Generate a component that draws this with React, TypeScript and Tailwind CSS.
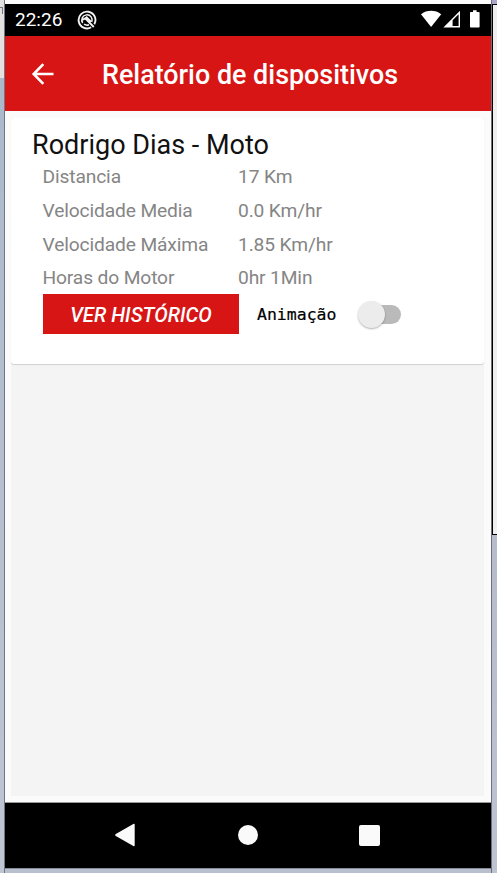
const rows = [
  { label: "Distancia", value: "17 Km" },
  { label: "Velocidade Media", value: "0.0 Km/hr" },
  { label: "Velocidade Máxima", value: "1.85 Km/hr" },
  { label: "Horas do Motor", value: "0hr 1Min" },
];

const StatusBar = () => {
  return (
    <div className="flex h-8 items-center bg-black pl-[10px] pr-[10px] text-white">
      <span className="text-[19px] leading-8">22:26</span>
      <svg className="ml-[15px]" width="20" height="20" viewBox="0 0 20 20" fill="none" stroke="#f2f2f2">
        <path d="M14.2 17.3A8.4 8.4 0 1 1 17.3 14.2" strokeWidth="1.9" />
        <path d="M5.7 13A5.2 5.2 0 1 1 14.8 12" strokeWidth="1.5" />
        <path d="M5.2 9.8L8.2 8.4L16.8 17" strokeWidth="1.9" />
        <path d="M8.8 6.8L14 12" strokeWidth="2.4" />
        <path d="M7 14.2Q9.4 15.8 12 14.7" strokeWidth="1.5" />
      </svg>
      <svg className="ml-auto" width="60" height="20" viewBox="0 0 60 20" fill="#fff">
        <path d="M0 4.3C5.5-.3 14.7-.3 20.2 4.3L10.1 17z" />
        <path fillRule="evenodd" d="M39 .8V17.4H22.4zM37.6 4.2L31.6 10.2V16H37.6z" />
        <path d="M52 .2h3.6v1.7h2.2q.8 0 .8.8v14q0 .8-.8.8h-8q-.8 0-.8-.8v-14q0-.8.8-.8H52z" />
      </svg>
    </div>
  );
};

const Header = () => {
  return (
    <header className="flex h-[75px] items-center bg-[#d81515] pl-[26px] text-white">
      <svg width="24" height="24" viewBox="0 0 24 24" fill="none" stroke="#fff" strokeWidth="2.6">
        <path d="M22.5 12H3.5M12.3 2.2L2.7 12L12.3 21.8" />
      </svg>
      <h1 className="ml-[47px] mt-[2px] whitespace-nowrap text-[26.9px] font-medium leading-8">
        Relatório de dispositivos
      </h1>
    </header>
  );
};

const DeviceCard = () => {
  return (
    <div className="h-[246px] rounded-[3px] bg-white pl-[21px] pt-[11px] shadow-[0_1px_1px_rgba(0,0,0,0.15)]">
      <h2 className="whitespace-nowrap text-[27px] leading-8 text-[#111]">Rodrigo Dias - Moto</h2>
      <dl className="-mt-px ml-[10.5px] text-[19.2px] tracking-[-0.13px] text-[#858585]">
        {rows.map((row) => (
          <div key={row.label} className="flex h-[33.8px] whitespace-nowrap leading-[34px]">
            <dt className="w-[195.5px]">{row.label}</dt>
            <dd>{row.value}</dd>
          </div>
        ))}
      </dl>
      <div className="-mt-px ml-[11px] flex h-10 items-center">
        <button className="h-10 w-[196px] bg-[#d81515] pt-px text-[20.2px] font-medium italic text-white">
          VER HISTÓRICO
        </button>
        <span className="ml-[18px] mt-[2px] font-['DejaVu_Sans_Mono',monospace] text-[16.5px] text-black [-webkit-text-stroke:0.2px_#000]">
          Animação
        </span>
        <span className="ml-[25px] flex h-[19px] w-10 items-center rounded-full bg-[#bababa]">
          <span className="-ml-[3px] size-[27px] shrink-0 rounded-full bg-[#ececec] shadow-[0_1px_2px_rgba(0,0,0,0.3)]" />
        </span>
      </div>
    </div>
  );
};

const NavBar = () => {
  return (
    <nav className="flex h-[65px] items-center bg-black pb-px pl-[109.5px]">
      <svg width="20" height="24" viewBox="0 0 20 24" fill="#fafafa">
        <path d="M18.3 1Q19.7.3 19.7 1.8V22.2Q19.7 23.7 18.3 23L.8 13Q-.5 12 .8 11z" />
      </svg>
      <span className="ml-[103px] size-5 rounded-full bg-[#fafafa]" />
      <span className="ml-[101px] size-[21px] rounded-[2px] bg-[#fafafa]" />
    </nav>
  );
};

export default function App() {
  return (
    <div className="flex h-[873px] w-[497px] overflow-hidden bg-[#b4bdcd] font-[Roboto,sans-serif]">
      <div className="flex w-[5px] shrink-0 flex-col border-r border-[#6e7782] bg-linear-to-b from-[#a9b8cc] to-[#c0c5d2]">
        <div className="h-[78px] bg-[#e3e2e1]">
          <div className="h-[14px] w-[3px] pt-[7px]">
            <div className="h-[7px] border-t border-r border-[#777]" />
          </div>
        </div>
      </div>
      <main className="flex w-[486px] shrink-0 flex-col">
        <div className="h-1 bg-[#fcfcfc]" />
        <StatusBar />
        <Header />
        <div className="h-[691px] bg-[#fbfbfb] px-[6px] pt-[7px] pb-[6px]">
          <div className="mr-px h-full bg-[#f4f4f4]">
            <DeviceCard />
          </div>
        </div>
        <div className="h-px bg-[#999]" />
        <NavBar />
        <div className="h-[5px] border-t border-[#858b98] bg-[#b8bfce]" />
      </main>
      <div className="flex w-[6px] shrink-0 flex-col border-l border-[#707076] bg-linear-to-b from-[#a8b0c2] to-[#bdc3d1]">
        <div className="h-1 bg-[#a9a6c9]" />
        <div className="h-[531px] border-y border-l border-black bg-[#f0eeee]" />
      </div>
    </div>
  );
}
